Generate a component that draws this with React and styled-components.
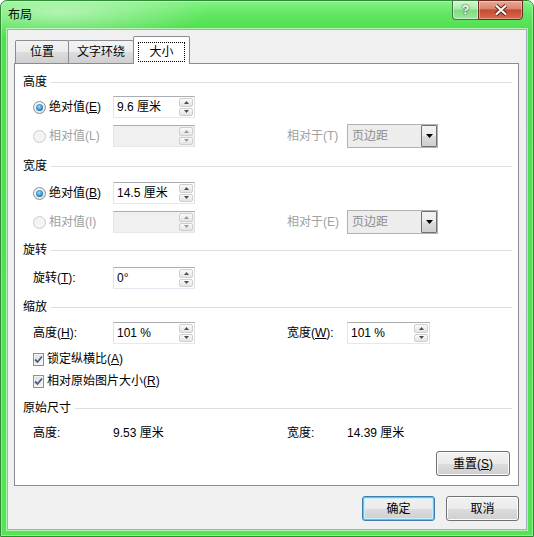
import React from 'react'
import styled, { createGlobalStyle } from 'styled-components'

const GlobalStyle = createGlobalStyle`
  html, body { margin: 0; padding: 0; background: #fff; }
  body {
    font-family: "Liberation Sans", "Noto Sans CJK SC", sans-serif;
    font-size: 12px;
    line-height: 16px;
    color: #000;
  }
  * { box-sizing: border-box; }
`

const Window = styled.div`
  width: 534px;
  height: 537px;
  display: flex;
  flex-direction: column;
  padding: 0 6px 6px 6px;
  border: 1px solid #2f8a35;
  border-radius: 7px 7px 0 0;
  background:
    radial-gradient(ellipse 150px 26px at 60px 12px, rgba(255, 255, 255, 0.5), transparent),
    linear-gradient(180deg, #84f284 0px, #5fe65f 14px, #50df50 28px, #56e356 100%);
  box-shadow: inset 0 0 0 1px rgba(255, 255, 255, 0.35);
`

const TitleBar = styled.div`
  display: flex;
  align-items: flex-start;
  height: 28px;
`

const Title = styled.div`
  margin-top: 6px;
  padding-left: 1px;
  color: #000;
`

const Controls = styled.div`
  display: flex;
  margin-left: auto;
  margin-right: 4px;
  margin-top: -1px;
`

const HelpButton = styled.div`
  width: 26px;
  height: 20px;
  display: flex;
  align-items: center;
  justify-content: center;
  border: 1px solid #3f7a43;
  border-right: none;
  border-radius: 0 0 0 4px;
  background: linear-gradient(180deg, #d2f8d2 0%, #a8eca8 45%, #7fdc7f 50%, #9be89b 100%);
  box-shadow: inset 0 0 0 1px rgba(255, 255, 255, 0.45);
  color: #fff;
  font-weight: bold;
  font-size: 13px;
  text-shadow: 0 0 2px #2c4f2c, 0 0 1px #2c4f2c;
`

const CloseButton = styled.div`
  width: 45px;
  height: 20px;
  display: flex;
  align-items: center;
  justify-content: center;
  border: 1px solid #6b2a20;
  border-radius: 0 0 4px 0;
  background: linear-gradient(180deg, #e9a996 0%, #db8670 42%, #c64a32 50%, #d66a4f 100%);
  box-shadow: inset 0 0 0 1px rgba(255, 255, 255, 0.35);
`

const Client = styled.div`
  flex: 1;
  display: flex;
  flex-direction: column;
  padding: 2px 7px 8px 6px;
  background: #f0f0f0;
  border: 1px solid #9fb0bd;
  box-shadow: 0 0 0 1px rgba(255, 255, 255, 0.55);
`

const TabStrip = styled.div`
  position: relative;
  z-index: 1;
  display: flex;
  align-items: flex-end;
  height: 31px;
  padding-left: 1px;
`

const Tab = styled.div`
  width: ${({ $w }) => $w}px;
  height: ${({ $active }) => ($active ? 28 : 23)}px;
  margin-bottom: ${({ $active }) => ($active ? -1 : 0)}px;
  display: flex;
  align-items: ${({ $active }) => ($active ? 'flex-end' : 'center')};
  justify-content: center;
  padding-bottom: ${({ $active }) => ($active ? 2 : 0)}px;
  border: 1px solid #898c95;
  border-bottom: none;
  border-radius: 2px 2px 0 0;
  background: ${({ $active }) =>
    $active ? '#fff' : 'linear-gradient(180deg, #f3f3f3 0%, #ebebeb 50%, #dddddd 50%, #cfcfcf 100%)'};
  & + & { margin-left: -1px; }
`

const FocusRect = styled.span`
  padding: 1px 10px;
  border: 1px dotted #000;
`

const Panel = styled.div`
  flex: 1;
  display: flex;
  flex-direction: column;
  padding: 10px 6px 8px 8px;
  background: #fff;
  border: 1px solid #898c95;
`

const SectionHead = styled.div`
  display: flex;
  align-items: center;
  gap: 4px;
  height: 16px;
  margin-top: ${({ $mt }) => $mt || 0}px;
  &::after {
    content: '';
    flex: 1;
    height: 1px;
    background: #dddfe2;
  }
`

const Row = styled.div`
  display: grid;
  grid-template-columns: 80px 174px 60px auto;
  align-items: center;
  height: ${({ $h }) => $h || 22}px;
  padding-left: 10px;
  margin-top: ${({ $mt }) => $mt}px;
`

const Option = styled.label`
  display: flex;
  align-items: center;
  gap: 3px;
  color: ${({ $disabled }) => ($disabled ? '#a0a0a0' : '#000')};
  white-space: nowrap;
`

const Label = styled.span`
  color: ${({ $disabled }) => ($disabled ? '#a0a0a0' : '#000')};
  white-space: nowrap;
`

const Radio = styled.span`
  width: 13px;
  height: 13px;
  border-radius: 50%;
  display: flex;
  align-items: center;
  justify-content: center;
  border: 1px solid ${({ $disabled }) => ($disabled ? '#cbcbcb' : '#8e8f8f')};
  background: ${({ $disabled }) =>
    $disabled ? '#f4f4f4' : 'radial-gradient(circle at 40% 35%, #ffffff, #e2e2e2 80%)'};
  &::after {
    content: '';
    display: ${({ $checked }) => ($checked ? 'block' : 'none')};
    width: 7px;
    height: 7px;
    border-radius: 50%;
    background: radial-gradient(circle at 45% 40%, #a8e4fb 0%, #3c9bd4 45%, #0f4a7c 100%);
  }
`

const CheckBox = styled.span`
  width: 13px;
  height: 13px;
  display: flex;
  align-items: center;
  justify-content: center;
  border: 1px solid #8e8f8f;
  background: linear-gradient(135deg, #dcdcdc, #f7f7f7);
  box-shadow: inset 0 0 0 1px #f4f4f4;
`

const Field = styled.div`
  display: flex;
  width: ${({ $w }) => $w}px;
  height: 22px;
  border: 1px solid #abadb3;
  border-color: #abadb3 #dbdfe6 #e3e9ef #e2e3ea;
  background: ${({ $disabled }) => ($disabled ? '#f0f0f0' : '#fff')};
`

const FieldInput = styled.input`
  flex: 1;
  min-width: 0;
  border: 0;
  outline: 0;
  padding: 0 0 0 3px;
  background: transparent;
  font: inherit;
  color: #000;
`

const Spinner = styled.div`
  display: flex;
  flex-direction: column;
  gap: 1px;
  width: 15px;
  padding: 1px 1px 1px 0;
`

const SpinButton = styled.div`
  flex: 1;
  display: flex;
  align-items: center;
  justify-content: center;
  border: 1px solid #cfcfcf;
  border-radius: 2px;
  background: linear-gradient(180deg, #fafafa, #e4e4e4);
`

const Combo = styled.div`
  display: flex;
  width: 91px;
  height: 24px;
  border: 1px solid #b2b2b2;
  background: #ededed;
`

const ComboText = styled.span`
  flex: 1;
  padding-left: 4px;
  line-height: 22px;
  color: #8d8d8d;
`

const ComboButton = styled.div`
  width: 16px;
  display: flex;
  align-items: center;
  justify-content: center;
  border: 1px solid #707070;
  border-radius: 1px;
  background: linear-gradient(180deg, #f2f2f2 0%, #ebebeb 50%, #dddddd 50%, #cfcfcf 100%);
`

const ButtonRow = styled.div`
  display: flex;
  justify-content: flex-end;
  gap: 11px;
  margin-top: ${({ $mt }) => $mt}px;
  padding-right: ${({ $pr }) => $pr || 0}px;
`

const Button = styled.div`
  width: ${({ $w }) => $w || 73}px;
  height: 25px;
  display: flex;
  align-items: center;
  justify-content: center;
  border: 1px solid ${({ $default }) => ($default ? '#3c7fb1' : '#707070')};
  border-radius: 3px;
  background: linear-gradient(180deg, #f2f2f2 0%, #ebebeb 50%, #dddddd 50%, #cfcfcf 100%);
  box-shadow: ${({ $default }) =>
    $default ? 'inset 0 0 0 1px #48cdf5, inset 0 0 0 2px #c6eefc' : 'inset 0 0 0 1px #fcfcfc'};
`

const Arrow = ({ up, color = '#4d4d4d' }) => (
  <svg width="5" height="3" viewBox="0 0 5 3">
    <path d={up ? 'M0 3 L2.5 0 L5 3 Z' : 'M0 0 L2.5 3 L5 0 Z'} fill={color} />
  </svg>
)

const SpinField = ({ value, disabled, w = 82 }) => (
  <Field $w={w} $disabled={disabled}>
    <FieldInput defaultValue={value} readOnly disabled={disabled} />
    <Spinner>
      <SpinButton><Arrow up color={disabled ? '#9a9a9a' : '#4d4d4d'} /></SpinButton>
      <SpinButton><Arrow color={disabled ? '#9a9a9a' : '#4d4d4d'} /></SpinButton>
    </Spinner>
  </Field>
)

const Dropdown = ({ value }) => (
  <Combo>
    <ComboText>{value}</ComboText>
    <ComboButton>
      <svg width="7" height="4" viewBox="0 0 7 4">
        <path d="M0 0 L3.5 4 L7 0 Z" fill="#000" />
      </svg>
    </ComboButton>
  </Combo>
)

const Check = () => (
  <CheckBox>
    <svg width="9" height="9" viewBox="0 0 9 9">
      <path d="M1 4.5 L3.5 7 L8 1.5" fill="none" stroke="#4a5d8e" strokeWidth="1.8" />
    </svg>
  </CheckBox>
)

const App = () => {
  return (
    <Window>
      <GlobalStyle />
      <TitleBar>
        <Title>布局</Title>
        <Controls>
          <HelpButton>?</HelpButton>
          <CloseButton>
            <svg width="14" height="12" viewBox="0 0 14 12">
              <path d="M2 1.5 L12 10.5 M12 1.5 L2 10.5" stroke="#5a1d12" strokeWidth="4" />
              <path d="M2 1.5 L12 10.5 M12 1.5 L2 10.5" stroke="#fff" strokeWidth="2.2" />
            </svg>
          </CloseButton>
        </Controls>
      </TitleBar>
      <Client>
        <TabStrip>
          <Tab $w={54}>位置</Tab>
          <Tab $w={66}>文字环绕</Tab>
          <Tab $w={57} $active><FocusRect>大小</FocusRect></Tab>
        </TabStrip>
        <Panel>
          <SectionHead>高度</SectionHead>
          <Row $mt={6}>
            <Option><Radio $checked /><span>绝对值(<u>E</u>)</span></Option>
            <SpinField value="9.6 厘米" />
          </Row>
          <Row $mt={6}>
            <Option $disabled><Radio $disabled /><span>相对值(L)</span></Option>
            <SpinField disabled />
            <Label $disabled>相对于(T)</Label>
            <Dropdown value="页边距" />
          </Row>

          <SectionHead $mt={12}>宽度</SectionHead>
          <Row $mt={8}>
            <Option><Radio $checked /><span>绝对值(<u>B</u>)</span></Option>
            <SpinField value="14.5 厘米" />
          </Row>
          <Row $mt={6}>
            <Option $disabled><Radio $disabled /><span>相对值(I)</span></Option>
            <SpinField disabled />
            <Label $disabled>相对于(E)</Label>
            <Dropdown value="页边距" />
          </Row>

          <SectionHead $mt={10}>旋转</SectionHead>
          <Row $mt={9}>
            <Label>旋转(<u>T</u>):</Label>
            <SpinField value="0°" />
          </Row>

          <SectionHead $mt={10}>缩放</SectionHead>
          <Row $mt={7}>
            <Label>高度(<u>H</u>):</Label>
            <SpinField value="101 %" />
            <Label>宽度(<u>W</u>):</Label>
            <SpinField value="101 %" w={83} />
          </Row>
          <Row $mt={7} $h={16}>
            <Option><Check /><span>锁定纵横比(<u>A</u>)</span></Option>
          </Row>
          <Row $mt={6} $h={16}>
            <Option><Check /><span>相对原始图片大小(<u>R</u>)</span></Option>
          </Row>

          <SectionHead $mt={11}>原始尺寸</SectionHead>
          <Row $mt={9} $h={16}>
            <Label>高度:</Label>
            <Label>9.53 厘米</Label>
            <Label>宽度:</Label>
            <Label>14.39 厘米</Label>
          </Row>

          <ButtonRow $mt={10} $pr={2}>
            <Button $w={74}>重置(<u>S</u>)</Button>
          </ButtonRow>
        </Panel>
        <ButtonRow $mt={10}>
          <Button $default>确定</Button>
          <Button>取消</Button>
        </ButtonRow>
      </Client>
    </Window>
  )
}

export default App
